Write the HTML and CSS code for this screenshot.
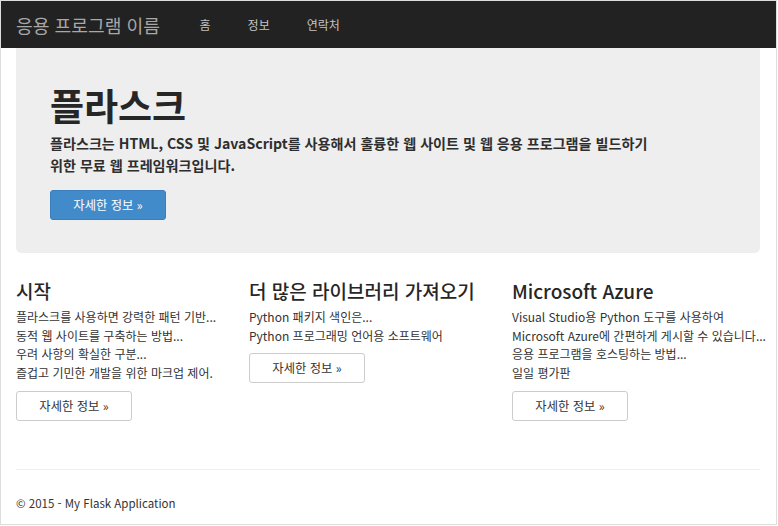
FILE: index.html
```html
<!DOCTYPE html>
<html lang="ko">
<head>
<meta charset="utf-8">
<title>홈 페이지 - 응용 프로그램 이름</title>
<link rel="stylesheet" href="styles.css">
</head>
<body>
<div class="frame">
  <nav class="navbar">
    <a class="brand" href="#">응용 프로그램 이름</a>
    <ul class="nav">
      <li><a href="#">홈</a></li>
      <li><a href="#">정보</a></li>
      <li><a href="#">연락처</a></li>
    </ul>
  </nav>
  <main class="container">
    <section class="jumbotron">
      <h1>플라스크</h1>
      <p class="lead">플라스크는 HTML, CSS 및 JavaScript를 사용해서 훌륭한 웹 사이트 및 웹 응용 프로그램을 빌드하기<br>위한 무료 웹 프레임워크입니다.</p>
      <a class="btn btn-primary" href="#">자세한 정보 &raquo;</a>
    </section>
    <div class="row">
      <div class="col">
        <h2>시작</h2>
        <p>플라스크를 사용하면 강력한 패턴 기반...<br>동적 웹 사이트를 구축하는 방법...<br>우려 사항의 확실한 구분...<br>즐겁고 기민한 개발을 위한 마크업 제어.</p>
        <a class="btn btn-default" href="#">자세한 정보 &raquo;</a>
      </div>
      <div class="col">
        <h2>더 많은 라이브러리 가져오기</h2>
        <p>Python 패키지 색인은...<br>Python 프로그래밍 언어용 소프트웨어</p>
        <a class="btn btn-default" href="#">자세한 정보 &raquo;</a>
      </div>
      <div class="col">
        <h2>Microsoft Azure</h2>
        <p>Visual Studio용 Python 도구를 사용하여<br>Microsoft Azure에 간편하게 게시할 수 있습니다...<br>응용 프로그램을 호스팅하는 방법...<br>일일 평가판</p>
        <a class="btn btn-default" href="#">자세한 정보 &raquo;</a>
      </div>
    </div>
    <hr class="divider">
    <footer class="footer">
      <p>&copy; 2015 - My Flask Application</p>
    </footer>
  </main>
</div>
</body>
</html>
```

FILE: styles.css
```css
* { box-sizing: border-box; }

html, body {
  margin: 0;
  padding: 0;
  background: #ffffff;
}

body {
  font-family: "Noto Sans CJK KR", "Noto Sans", sans-serif;
  color: #333333;
}

.frame {
  width: 777px;
  height: 525px;
  border: 1px solid #dddddd;
  overflow: hidden;
  background: #ffffff;
}

.navbar {
  height: 47px;
  background: #222222;
  display: flex;
  align-items: center;
  padding-left: 15px;
}

.brand {
  font-size: 18.2px;
  color: #a8a8a8;
  text-decoration: none;
  margin-right: 21px;
}

.nav {
  list-style: none;
  margin: 0;
  padding: 0;
  display: flex;
}

.nav a {
  display: block;
  padding: 0 18.5px;
  font-size: 12px;
  color: #c2c2c2;
  text-decoration: none;
}

.container {
  padding: 0 16px 0 15px;
}

.jumbotron {
  background: #eeeeee;
  border-radius: 0 0 5px 5px;
  padding: 38px 34px 33px;
  margin-bottom: 26px;
}

.jumbotron h1 {
  margin: 0;
  font-size: 37px;
  line-height: 38px;
  font-weight: 700;
  color: #262626;
}

.lead {
  margin: 8px 0 0;
  font-size: 14.1px;
  line-height: 22px;
  font-weight: 700;
  color: #2e2e2e;
}

.btn {
  display: inline-flex;
  align-items: center;
  justify-content: center;
  height: 30px;
  border-radius: 3px;
  font-size: 12.3px;
  text-decoration: none;
  white-space: nowrap;
}

.btn-primary {
  margin-top: 14px;
  width: 116px;
  background: #428bca;
  border: 1px solid #3a7fbd;
  color: #ffffff;
}

.btn-default {
  margin-top: 8px;
  width: 116px;
  background: #ffffff;
  border: 1px solid #cccccc;
  color: #333333;
}

.row {
  display: grid;
  grid-template-columns: 233px 263px 1fr;
  align-items: start;
}

.col h2 {
  margin: 0 0 5px;
  font-size: 19px;
  line-height: 24px;
  font-weight: 500;
  color: #262626;
  white-space: nowrap;
}

.col p {
  margin: 0;
  font-size: 12px;
  line-height: 18.7px;
  white-space: nowrap;
  color: #333333;
}

.divider {
  margin: 48px 0 0;
  border: 0;
  border-top: 1px solid #eeeeee;
  height: 0;
}

.footer p {
  margin: 24px 0 0;
  font-size: 11.5px;
  line-height: 18px;
  color: #333333;
}
```
